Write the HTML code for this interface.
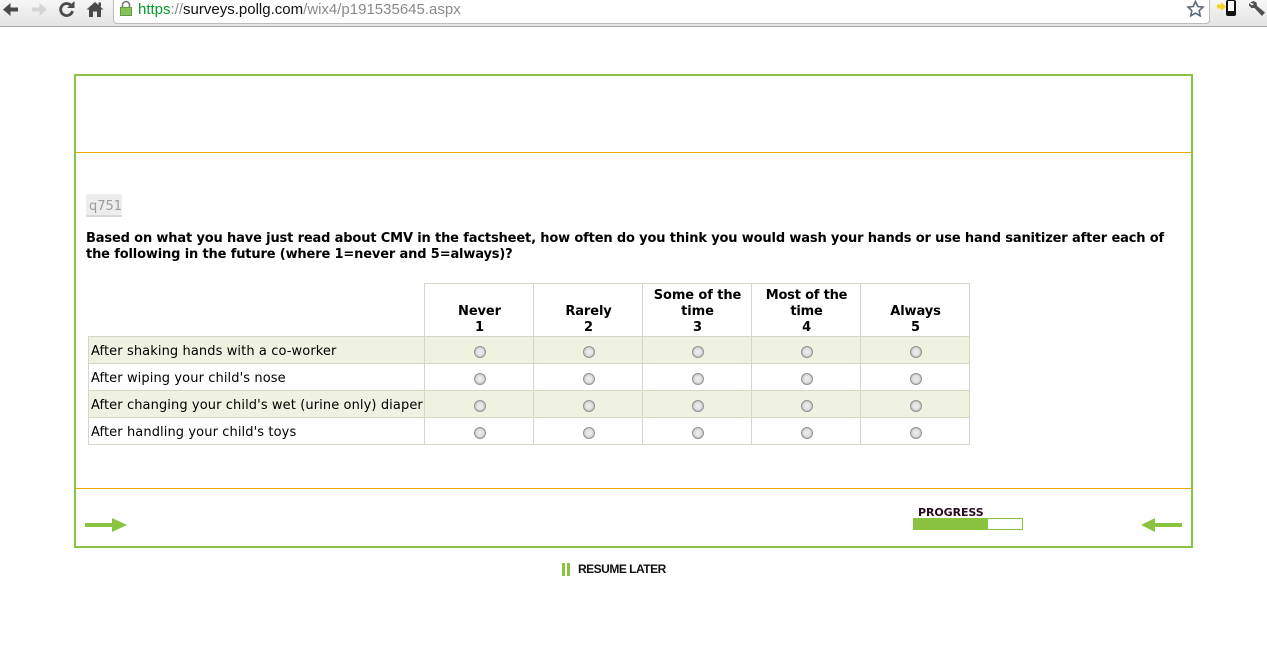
<!DOCTYPE html>
<html><head><meta charset="utf-8"><style>
html,body{margin:0;padding:0;background:#fff;width:1267px;height:667px;overflow:hidden}
body{position:relative;font-family:"DejaVu Sans","Liberation Sans",sans-serif;color:#000}
.a{position:absolute}
.t{position:absolute;white-space:nowrap}
.h{position:absolute;white-space:nowrap;font-weight:bold;font-size:13px;line-height:16px;text-align:center;width:109px;letter-spacing:-.1px}
.l{position:absolute;left:91px;white-space:nowrap;font-size:13px;line-height:16px;letter-spacing:.1px}
.r{position:absolute;width:10px;height:10px;border:1px solid #939393;border-radius:50%;background:radial-gradient(circle at 50% 50%,#eeeeee 0,#e2e2e2 45%,#a8a8a8 100%)}
.hl{position:absolute;background:#d6d6c8;height:1px}
.vl{position:absolute;background:#d6d6c8;width:1px}
</style></head><body>
<div class="a" style="left:0;top:0;width:1267px;height:26px;background:linear-gradient(#f6f6f6,#e4e4e4)"></div>
<div class="a" style="left:0;top:26px;width:1267px;height:1px;background:#a8a8a8"></div>
<div class="a" style="left:113px;top:-2px;width:1095px;height:24px;background:#fff;border:1px solid #bcbcbc;border-radius:0 0 4px 4px"></div>
<svg class="a" style="left:0;top:0" width="112" height="20" viewBox="0 0 112 20">
<path d="M18 7.5H10.5V3L3 9.5 10.5 16V11.5H18z" fill="#4a4a4a"/>
<path d="M32 7.5H39.5V3L47 9.5 39.5 16V11.5H32z" fill="#d4d4d4"/>
<path d="M71.5 6A6 6 0 1 0 72.5 11" fill="none" stroke="#4a4a4a" stroke-width="2.8"/>
<path d="M67 8H74.5V1z" fill="#4a4a4a"/>
<path d="M86.5 9.5L95 2 103.5 9.5H101V17H97V11.5H93V17H89V9.5z" fill="#4a4a4a"/>
<rect x="98.5" y="2.5" width="2.5" height="4" fill="#4a4a4a"/>
</svg>
<svg class="a" style="left:119px;top:0" width="14" height="18" viewBox="0 0 14 18">
<path d="M3.5 8V5a3.5 3.5 0 0 1 7 0V8" fill="none" stroke="#777" stroke-width="1.6"/>
<rect x="1.5" y="7.5" width="11" height="8" fill="#84c455" stroke="#6a9a45"/>
</svg>
<div class="t" style="left:138px;top:1px;font-family:'Liberation Sans',sans-serif;font-size:15px;line-height:18px"><span style="color:#0a9a2a">https</span><span style="color:#8a8a8a">://</span><span style="color:#111">surveys.pollg.com</span><span style="color:#8a8a8a">/wix4/p191535645.aspx</span></div>
<svg class="a" style="left:1186px;top:0" width="20" height="18" viewBox="0 0 20 18">
<path d="M9.5 1.5L11.8 6.5 17 7.1 13.2 10.6 14.2 15.8 9.5 13.2 4.8 15.8 5.8 10.6 2 7.1 7.2 6.5z" fill="#fff" stroke="#5d6a7a" stroke-width="1.6"/>
</svg>
<svg class="a" style="left:1216px;top:0" width="22" height="18" viewBox="0 0 22 18">
<path d="M1 4.5H5V2L10 6.5 5 11V8.5H1z" fill="#f3d320"/>
<rect x="10" y="0" width="10" height="16" rx="2" fill="#111"/>
<rect x="12" y="1" width="6" height="10" fill="#fff"/>
</svg>
<svg class="a" style="left:1248px;top:0" width="18" height="18" viewBox="0 0 18 18">
<path d="M2 2.5L5.5 1 8.5 2.5 9 6 17 12.5 14 16 6.5 8 3.5 8 1 5.5V3L4 5.5 6 4z" fill="#4f4f4f"/>
</svg>

<div class="a" style="left:74px;top:74px;width:1115px;height:470px;border:2px solid #8ac33f"></div>
<div class="a" style="left:76px;top:152px;width:1115px;height:1px;background:#f0a800"></div>
<div class="a" style="left:76px;top:488px;width:1115px;height:1px;background:#f0a800"></div>

<div class="a" style="left:86px;top:194px;width:36px;height:23px;background:#ededed;border-bottom:2px solid #d8d8d8;box-sizing:border-box"></div>
<div class="t" style="left:89px;top:199px;font-size:13px;line-height:16px;color:#9c9c9c">q751</div>

<div class="t" style="left:86px;top:231px;font-size:13px;font-weight:bold;line-height:16px;letter-spacing:-.15px">Based on what you have just read about CMV in the factsheet, how often do you think you would wash your hands or use hand sanitizer after each of</div>
<div class="t" style="left:86px;top:247px;font-size:13px;font-weight:bold;line-height:16px;letter-spacing:-.15px">the following in the future (where 1=never and 5=always)?</div>

<div class="a" style="left:88px;top:336px;width:881px;height:27px;background:#eff1e1"></div>
<div class="a" style="left:88px;top:390px;width:881px;height:27px;background:#eff1e1"></div>
<div class="hl" style="left:424px;top:283px;width:546px"></div>
<div class="hl" style="left:88px;top:336px;width:882px"></div>
<div class="hl" style="left:88px;top:363px;width:882px"></div>
<div class="hl" style="left:88px;top:390px;width:882px"></div>
<div class="hl" style="left:88px;top:417px;width:882px"></div>
<div class="hl" style="left:88px;top:444px;width:882px"></div>
<div class="vl" style="left:88px;top:336px;height:109px"></div>
<div class="vl" style="left:424px;top:283px;height:162px"></div>
<div class="vl" style="left:533px;top:283px;height:162px"></div>
<div class="vl" style="left:642px;top:283px;height:162px"></div>
<div class="vl" style="left:751px;top:283px;height:162px"></div>
<div class="vl" style="left:860px;top:283px;height:162px"></div>
<div class="vl" style="left:969px;top:283px;height:162px"></div>

<div class="h" style="left:425px;top:304px">Never<br>1</div>
<div class="h" style="left:534px;top:304px">Rarely<br>2</div>
<div class="h" style="left:643px;top:288px">Some of the<br>time<br>3</div>
<div class="h" style="left:752px;top:288px;letter-spacing:-.2px">Most of the<br>time<br>4</div>
<div class="h" style="left:861px;top:304px">Always<br>5</div>

<div class="l" style="top:344px">After shaking hands with a co-worker</div>
<div class="l" style="top:371px">After wiping your child's nose</div>
<div class="l" style="top:398px">After changing your child's wet (urine only) diaper</div>
<div class="l" style="top:425px">After handling your child's toys</div>

<div class="r" style="left:474px;top:346px"></div><div class="r" style="left:583px;top:346px"></div><div class="r" style="left:692px;top:346px"></div><div class="r" style="left:801px;top:346px"></div><div class="r" style="left:910px;top:346px"></div>
<div class="r" style="left:474px;top:373px"></div><div class="r" style="left:583px;top:373px"></div><div class="r" style="left:692px;top:373px"></div><div class="r" style="left:801px;top:373px"></div><div class="r" style="left:910px;top:373px"></div>
<div class="r" style="left:474px;top:400px"></div><div class="r" style="left:583px;top:400px"></div><div class="r" style="left:692px;top:400px"></div><div class="r" style="left:801px;top:400px"></div><div class="r" style="left:910px;top:400px"></div>
<div class="r" style="left:474px;top:427px"></div><div class="r" style="left:583px;top:427px"></div><div class="r" style="left:692px;top:427px"></div><div class="r" style="left:801px;top:427px"></div><div class="r" style="left:910px;top:427px"></div>

<svg class="a" style="left:85px;top:518px" width="42" height="14" viewBox="0 0 42 14"><path d="M0 5H27V0L42 7 27 14V9H0z" fill="#8ac33f"/></svg>
<svg class="a" style="left:1141px;top:518px" width="41" height="14" viewBox="0 0 41 14"><path d="M41 5H14V0L0 7 14 14V9H41z" fill="#8ac33f"/></svg>

<div class="t" style="left:918px;top:506px;font-size:11px;font-weight:bold;line-height:14px;color:#2a0a20;letter-spacing:-.08px">PROGRESS</div>
<div class="a" style="left:913px;top:518px;width:108px;height:10px;border:1px solid #8ac33f;background:#fff"></div>
<div class="a" style="left:913px;top:518px;width:75px;height:12px;background:#8ac33f"></div>

<div class="a" style="left:562px;top:563px;width:3px;height:13px;background:#8ac33f"></div>
<div class="a" style="left:567px;top:563px;width:3px;height:13px;background:#8ac33f"></div>
<div class="t" style="left:578px;top:562px;font-family:'Liberation Sans',sans-serif;font-size:12px;font-weight:bold;line-height:15px;color:#111;letter-spacing:-.5px">RESUME LATER</div>
</body></html>
